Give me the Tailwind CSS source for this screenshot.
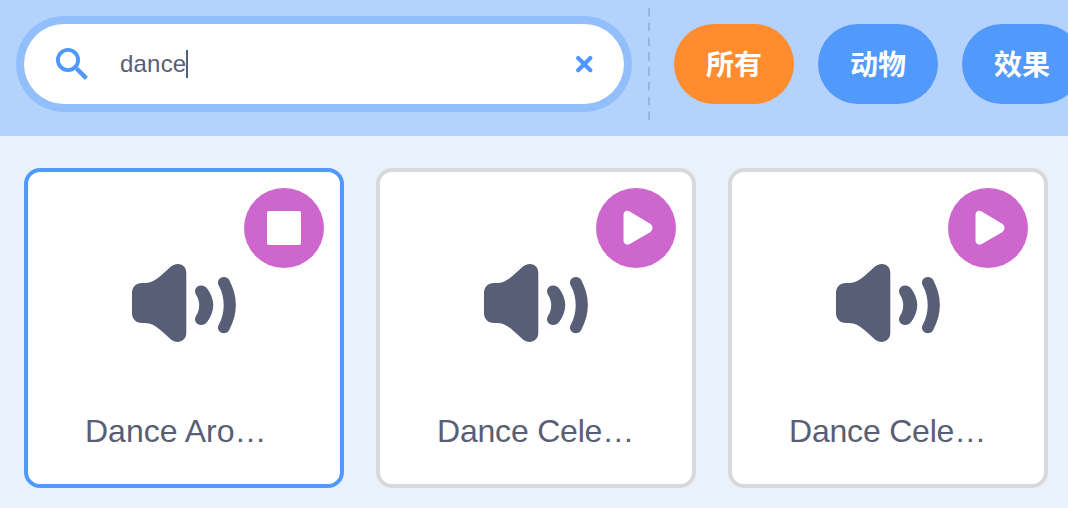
<!DOCTYPE html>
<html lang="zh-CN">
<head>
<meta charset="utf-8">
<title>Sound library</title>
<script src="https://cdn.jsdelivr.net/npm/@tailwindcss/browser@4"></script>
</head>
<body class="w-[1068px] h-[508px] overflow-hidden bg-[#e9f1fc] font-['Liberation_Sans','Noto_Sans_CJK_SC',sans-serif] text-[#575e75]">
<svg class="hidden">
  <symbol id="speaker" viewBox="0 0 106 80">
    <path d="M0 30C0 24 4 20 10 20H13C19 20 24 17 29 12.500L39 3.500C45-1.500 54.300 1 54.300 10V70C54.300 78.500 45 81.500 39 76.500L29 67.500C24 63 19 60 13 60H10C4 60 0 56 0 50Z" fill="#575e75"/>
    <path transform="translate(0 1)" d="M64.200 31C61 25.500 65 21.500 69 21.500C72 21.500 74 23 75.500 25C83.200 36 83.200 46.500 75.500 57.500C74 59.500 72 61 69 61C65 61 61 57 64.200 51.500C68.200 45.500 68.200 37 64.200 31Z" fill="#575e75"/>
    <path transform="translate(0 1)" d="M87 22C84.200 17.500 87.500 13 91.800 13C94.500 13 96.500 14.300 97.500 16.500C106 33 106 49 97.500 65.500C96.500 67.700 94.500 69.300 91.800 69.300C87.500 69.300 84.200 64.800 87 60.300C93.300 49 93.300 33.500 87 22Z" fill="#575e75"/>
  </symbol>
  <symbol id="play" viewBox="0 0 80 80">
    <path d="M27.500 27C27.500 23.500 30.800 21.800 33.700 23.600L54.200 35.800C57.200 37.600 57.200 42.400 54.200 44.200L33.700 55.900C30.800 57.700 27.500 56 27.500 52.500Z" fill="#fff"/>
  </symbol>
</svg>
<header class="flex h-[136px] bg-[#b3d2fc]">
  <div class="ml-6 mt-6 flex h-20 w-[600px] shrink-0 items-center rounded-full bg-white pl-8 pr-[30px] ring-8 ring-[#92bffc]">
    <svg class="size-8 shrink-0" viewBox="0 0 32 32" fill="none" stroke="#4d97ff"><circle cx="12" cy="12" r="10.100" stroke-width="3.800"/><path d="M19 19L20.500 20.500" stroke-width="2.600"/><path d="M20.500 20.500L30.400 30.400" stroke-width="4.400"/></svg>
    <span class="ml-8 text-2xl leading-7 tracking-[0.200px]">dance</span><span class="h-7 w-0.5 shrink-0 bg-[#575e75]"></span>
    <svg class="ml-auto size-5" viewBox="0 0 20 20" fill="none" stroke="#4d97ff" stroke-width="4.200" stroke-linecap="round"><path d="M4.100 4.100L16.400 16.200M16.400 4.100L4.100 16.200"/></svg>
  </div>
  <svg class="ml-6 mt-2 h-28 w-0.5 shrink-0"><path d="M1 0V112" stroke="#9ab6dd" stroke-width="2" stroke-dasharray="8.500 6.286"/></svg>
  <nav class="ml-6 mt-6 flex shrink-0 gap-6 text-[28px] font-bold text-white">
    <button class="flex h-20 w-[120px] items-center justify-center rounded-full bg-[#ff8c2e] pt-[3px]">所有</button>
    <button class="flex h-20 w-[120px] items-center justify-center rounded-full bg-[#5299fc] pt-[3px]">动物</button>
    <button class="flex h-20 w-[120px] items-center justify-center rounded-full bg-[#5299fc] pt-[3px]">效果</button>
  </nav>
</header>
<main class="flex gap-8 pl-6 pt-8 text-[32px]">
  <article class="relative flex size-80 shrink-0 flex-col rounded-2xl border-4 border-[#5299fc] bg-white">
    <svg class="ml-[104px] mt-[91px] h-20 w-[106px]"><use href="#speaker"/></svg>
    <p class="ml-[57px] mt-[68px] leading-10 whitespace-nowrap">Dance Aro…</p>
    <button class="absolute right-4 top-4 flex size-20 items-center justify-center rounded-full bg-[#cd66cd]"><span class="size-[34px] rounded-[2px] bg-white"></span></button>
  </article>
  <article class="relative flex size-80 shrink-0 flex-col rounded-2xl border-4 border-[#d9d9d9] bg-white">
    <svg class="ml-[104px] mt-[91px] h-20 w-[106px]"><use href="#speaker"/></svg>
    <p class="ml-[57px] mt-[68px] leading-10 tracking-[-0.200px] whitespace-nowrap">Dance Cele…</p>
    <button class="absolute right-4 top-4 size-20 rounded-full bg-[#cd66cd]"><svg class="size-20"><use href="#play"/></svg></button>
  </article>
  <article class="relative flex size-80 shrink-0 flex-col rounded-2xl border-4 border-[#d9d9d9] bg-white">
    <svg class="ml-[104px] mt-[91px] h-20 w-[106px]"><use href="#speaker"/></svg>
    <p class="ml-[57px] mt-[68px] leading-10 tracking-[-0.200px] whitespace-nowrap">Dance Cele…</p>
    <button class="absolute right-4 top-4 size-20 rounded-full bg-[#cd66cd]"><svg class="size-20"><use href="#play"/></svg></button>
  </article>
</main>
</body>
</html>
